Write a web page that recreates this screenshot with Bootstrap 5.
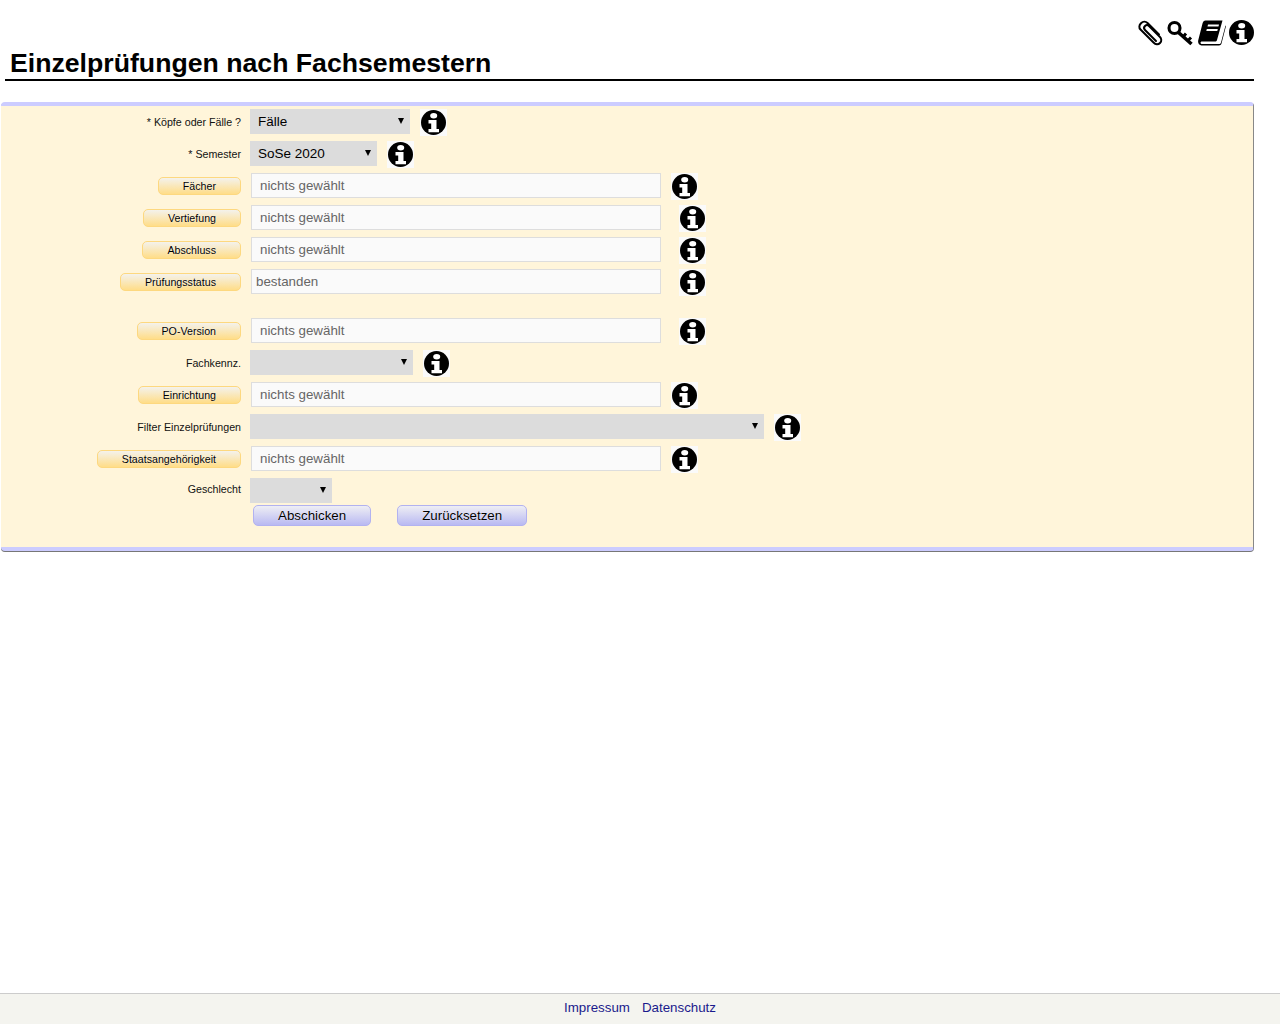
<!DOCTYPE html>
<html lang="de">
<head>
<meta charset="utf-8">
<title>Einzelprüfungen nach Fachsemestern</title>
<link href="https://cdn.jsdelivr.net/npm/bootstrap@5.3.0/dist/css/bootstrap.min.css" rel="stylesheet">
<style>
html,body{height:100%}
body{font-family:"Liberation Sans",Arial,sans-serif;color:#000;background:#fff}
.page-wrap{min-height:1024px}
.tool-icons{height:47px;padding:20px 26px 0 0}
.clip-ico{margin:0 2px 0 0}.key-ico{margin:0 4px 0 0}.book-ico{margin:0 3px 0 0}
.page-title{font-size:26.67px;font-weight:700;line-height:32px;margin:0 26px 0 5px;padding:0 0 0 5px;height:34px;border-bottom:2px solid #000}
.form-panel{margin:21px 26px 0 1px;height:449px;background:#fff5da;border-top:4px solid #ccf;border-bottom:4px solid #ccf;border-right:1px solid #888;border-radius:4px;box-shadow:0 1px 0 #777;padding-top:3px}
.form-line{height:32px;align-items:flex-start}
.line-gap{margin-bottom:17px}
.label-cell{width:240px;flex:none;height:26px;display:flex;align-items:center;justify-content:flex-end;font-size:10.67px;color:#111}
.label-up{padding-bottom:4px}
.pick{appearance:none;-webkit-appearance:none;height:25px;margin-left:9px;border:0;border-radius:0;background-color:#dcdcdc;font-size:13.5px;padding:2px 8px 0;color:#000;font-family:inherit;display:block;outline:none;background-image:url("data:image/svg+xml,%3Csvg xmlns='http://www.w3.org/2000/svg' width='6' height='7'%3E%3Cpath d='M0 1h6L3 7z'/%3E%3C/svg%3E");background-repeat:no-repeat;background-position:right 6px top 8px}
.w160{width:160px}.w127{width:127px}.w163{width:163px}.w514{width:514px}.w82{width:82px}
.txt-field{width:410px;height:25px;margin-left:10px;border:1px solid #ddd;background:#fafafa;color:#666;font-size:13.33px;padding:0 8px;font-family:inherit;outline:none;border-radius:0}
.txt-field::placeholder{color:#666;opacity:1}
.txt-tight{padding-left:4px}
.fill-btn{height:18px;margin-top:0;padding:0 24px;border:1px solid #fdd87f;border-radius:5px;font-size:10.67px;line-height:15px;color:#000;background:linear-gradient(#f4f2ec,#ffdd88);text-shadow:0 0 1px #fff;font-family:inherit}
.info-box{flex:none;width:27px;height:27px;background:#fafafa;display:flex;align-items:flex-start;justify-content:flex-start;padding:1px 0 0 1px}
.gap-10{margin-left:10px}.gap-18{margin-left:18px}
.submit-line{padding-left:252px;gap:26px;margin-top:-5px}
.send-btn{height:21px;padding:0 24px;border:1px solid #b2b2f0;border-radius:5px;font-size:13.33px;line-height:18px;color:#000;background:linear-gradient(#eeeef4,#b9b9f2);text-shadow:0 0 1px #fff;font-family:inherit}
.page-foot{height:31px;background:#f4f4ef;border-top:1px solid #ccc;font-size:13.33px;gap:12px;padding-top:6px;line-height:15px}
.page-foot a{color:#1a1a8c;text-decoration:none}
</style>
</head>
<body class="m-0">
<svg width="0" height="0" class="d-block" style="position:absolute">
<defs>
<symbol id="info" viewBox="0 0 25 25">
<circle cx="12.500" cy="12.500" r="12.500" fill="#000"/>
<ellipse cx="12.700" cy="5.700" rx="3.500" ry="2.700" fill="#fff"/>
<path d="M7.500 10h8v9h2.500v3.300H7.500V19h2.700v-5.500H7.500z" fill="#fff"/>
</symbol>
</defs>
</svg>
<div class="page-wrap d-flex flex-column">
<div class="tool-icons d-flex justify-content-end align-items-start">
<svg class="clip-ico" width="26" height="26" viewBox="0 0 26 26" fill="none" stroke="#000" stroke-width="2" stroke-linecap="round"><path d="M18 21 7 10C5.500 8.500 6 7 7 6s2.500-1.500 4 0l10.500 10.500C23.500 18.500 24 21 22 23s-4.500 1.500-6.500-.5L2.500 9.500C.8 7.800 1 5.200 3 3.200s4.700-2 6.500-.2L21 14.500"/></svg>
<svg class="key-ico" width="28" height="26" viewBox="0 0 28 26" fill="none" stroke="#000"><circle cx="8.500" cy="8" r="5.500" stroke-width="3.100"/><path d="M12.500 12.500 25.500 24" stroke-width="3.600"/><path d="M17 17l3-3.500M21.500 21l3.500-3.500" stroke-width="3"/></svg>
<svg class="book-ico" width="28" height="26" viewBox="0 0 28 26" fill="#000"><path fill-rule="evenodd" d="M7.500 0.500H24.500L19 20c-.3 1-1 1.500-2 1.500H4C2 21.500 2 24 4 24h17c1 0 1.600-.5 2-1.500L27.500 5.500 28 6 23.500 23.500c-.3 1.200-1.300 2-2.500 2H3.500C1 25.500 -.5 23 .3 20L4.500 3.500C5 1.500 6 .5 7.500 .5zM10 4.500l-.5 2h11l.5-2zM8.800 9l-.5 2h11l.5-2z"/></svg>
<svg width="25" height="25"><use href="#info"/></svg>
</div>
<h1 class="page-title">Einzelprüfungen nach Fachsemestern</h1>
<form class="form-panel">
<div class="form-line d-flex"><label class="label-cell">* Köpfe oder Fälle ?</label><select class="pick w160"><option>Fälle</option></select><span class="info-box gap-10"><svg width="25" height="25"><use href="#info"/></svg></span></div>
<div class="form-line d-flex"><label class="label-cell">* Semester</label><select class="pick w127"><option>SoSe 2020</option></select><span class="info-box gap-10"><svg width="25" height="25"><use href="#info"/></svg></span></div>
<div class="form-line d-flex"><div class="label-cell"><button type="button" class="fill-btn">Fächer</button></div><input class="txt-field" placeholder="nichts gewählt"><span class="info-box gap-10"><svg width="25" height="25"><use href="#info"/></svg></span></div>
<div class="form-line d-flex"><div class="label-cell"><button type="button" class="fill-btn">Vertiefung</button></div><input class="txt-field" placeholder="nichts gewählt"><span class="info-box gap-18"><svg width="25" height="25"><use href="#info"/></svg></span></div>
<div class="form-line d-flex"><div class="label-cell"><button type="button" class="fill-btn">Abschluss</button></div><input class="txt-field" placeholder="nichts gewählt"><span class="info-box gap-18"><svg width="25" height="25"><use href="#info"/></svg></span></div>
<div class="form-line line-gap d-flex"><div class="label-cell"><button type="button" class="fill-btn">Prüfungsstatus</button></div><input class="txt-field txt-tight" placeholder="bestanden"><span class="info-box gap-18"><svg width="25" height="25"><use href="#info"/></svg></span></div>
<div class="form-line d-flex"><div class="label-cell"><button type="button" class="fill-btn">PO-Version</button></div><input class="txt-field" placeholder="nichts gewählt"><span class="info-box gap-18"><svg width="25" height="25"><use href="#info"/></svg></span></div>
<div class="form-line d-flex"><label class="label-cell">Fachkennz.</label><select class="pick w163"><option></option></select><span class="info-box gap-10"><svg width="25" height="25"><use href="#info"/></svg></span></div>
<div class="form-line d-flex"><div class="label-cell"><button type="button" class="fill-btn">Einrichtung</button></div><input class="txt-field" placeholder="nichts gewählt"><span class="info-box gap-10"><svg width="25" height="25"><use href="#info"/></svg></span></div>
<div class="form-line d-flex"><label class="label-cell">Filter Einzelprüfungen</label><select class="pick w514"><option></option></select><span class="info-box gap-10"><svg width="25" height="25"><use href="#info"/></svg></span></div>
<div class="form-line d-flex"><div class="label-cell"><button type="button" class="fill-btn">Staatsangehörigkeit</button></div><input class="txt-field" placeholder="nichts gewählt"><span class="info-box gap-10"><svg width="25" height="25"><use href="#info"/></svg></span></div>
<div class="form-line d-flex"><label class="label-cell label-up">Geschlecht</label><select class="pick w82"><option></option></select></div>
<div class="submit-line d-flex"><button type="submit" class="send-btn">Abschicken</button><button type="reset" class="send-btn">Zurücksetzen</button></div>
</form>
<div class="page-foot mt-auto d-flex justify-content-center"><a href="#">Impressum</a><a href="#">Datenschutz</a></div>
</div>
<script src="https://cdn.jsdelivr.net/npm/bootstrap@5.3.0/dist/js/bootstrap.bundle.min.js"></script>
</body>
</html>
